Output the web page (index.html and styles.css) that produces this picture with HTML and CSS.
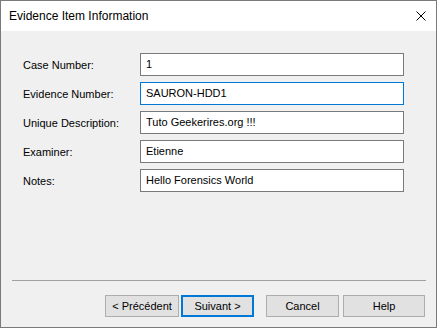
FILE: index.html
```html
<!DOCTYPE html>
<html lang="en">
<head>
  <meta charset="UTF-8">
  <title>Evidence Item Information</title>
  <link rel="stylesheet" href="styles.css">
</head>
<body>

<div class="window">
  <!-- Title bar -->
  <div class="titlebar">
    <span class="title">Evidence Item Information</span>
    <svg class="close" width="10" height="10" viewBox="0 0 10 10">
      <path d="M0.5 0.5 L9.5 9.5 M9.5 0.5 L0.5 9.5" stroke="#000" stroke-width="1" fill="none"/>
    </svg>
  </div>

  <div class="content">
    <div class="form">
      <div class="row">
        <label>Case Number:</label>
        <div class="field">1</div>
      </div>
      <div class="row first-gap">
        <label>Evidence Number:</label>
        <div class="field focused">SAURON-HDD1</div>
      </div>
      <div class="row">
        <label>Unique Description:</label>
        <div class="field">Tuto Geekerires.org !!!</div>
      </div>
      <div class="row">
        <label>Examiner:</label>
        <div class="field">Etienne</div>
      </div>
      <div class="row">
        <label>Notes:</label>
        <div class="field">Hello Forensics World</div>
      </div>
    </div>

    <div class="separator"></div>

    <div class="buttons">
      <button class="btn">&lt; Précédent</button>
      <button class="btn default">Suivant &gt;</button>
      <button class="btn cancel">Cancel</button>
      <button class="btn help">Help</button>
    </div>
  </div>
</div>

</body>
</html>
```

FILE: styles.css
```css
body {
  margin: 0;
  background-color: #f0f0f0;
  font-family: "Liberation Sans", Arial, sans-serif;
}

.window {
  width: 437px;
  height: 328px;
  box-sizing: border-box;
  border: 1px solid #7a7a7a;
  display: flex;
  flex-direction: column;
  background-color: #f0f0f0;
}

.titlebar {
  height: 30px;
  background-color: #fff;
  display: flex;
  align-items: center;
  justify-content: space-between;
  padding: 0 10px 0 8px;
}

.title {
  font-size: 12px;
  color: #000;
}

.close {
  display: block;
}

.content {
  flex: 1;
  display: flex;
  flex-direction: column;
}

.form {
  padding: 22px 0 0 22px;
  flex: 1;
}

.row {
  display: flex;
  align-items: center;
  margin-bottom: 6px;
}

.row.first-gap {
  margin-top: 1px;
}

label {
  width: 117px;
  font-size: 11px;
  color: #000;
}

.field {
  width: 264px;
  height: 23px;
  box-sizing: border-box;
  border: 1px solid #7a7a7a;
  background-color: #fff;
  font-size: 11px;
  line-height: 21px;
  padding-left: 5px;
  color: #000;
}

.field.focused {
  border-color: #0078d7;
}

.separator {
  height: 1px;
  margin: 0 10px 0 11px;
  background-color: #a0a0a0;
}

.buttons {
  display: flex;
  justify-content: flex-end;
  padding: 14px 11px 10px 0;
}

.btn {
  width: 74px;
  height: 22px;
  box-sizing: border-box;
  margin: 0;
  padding: 0;
  border: 1px solid #adadad;
  background-color: #e1e1e1;
  font-family: "Liberation Sans", Arial, sans-serif;
  font-size: 11px;
  color: #000;
}

.btn.default {
  width: 73px;
  margin-left: 2px;
  border: 2px solid #0078d7;
}

.btn.cancel {
  width: 73px;
  margin-left: 12px;
}

.btn.help {
  width: 82px;
  margin-left: 4px;
}
```
